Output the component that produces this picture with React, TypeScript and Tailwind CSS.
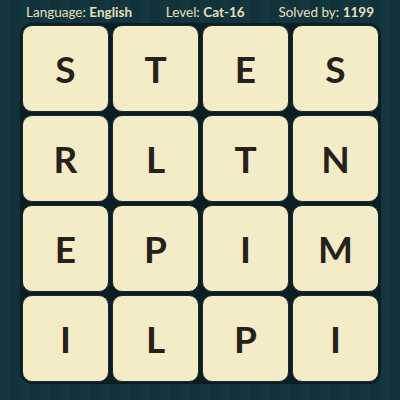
const rows = [
  ["S", "T", "E", "S"],
  ["R", "L", "T", "N"],
  ["E", "P", "I", "M"],
  ["I", "L", "P", "I"],
];

function Stat({ label, value }: { label: string; value: string }) {
  return (
    <span className="text-[13.5px] text-[#e6e0bd]">
      {label}: <span className="font-bold">{value}</span>
    </span>
  );
}

export default function App() {
  return (
    <div className="h-[400px] w-[400px] overflow-hidden bg-[#133540] bg-[repeating-linear-gradient(90deg,#14363f_0px,#14363f_10px,#12323b_10px,#12323b_20px)] font-['Lato',sans-serif]">
      <div className="flex h-[24px] items-center justify-between pl-[26px] pr-[26px] pt-[1px]">
        <Stat label="Language" value="English" />
        <Stat label="Level" value="Cat-16" />
        <Stat label="Solved by" value="1199" />
      </div>
      <div className="ml-[20px] mt-[-1px] w-[361px] rounded-[12px] bg-[#0b1e24] p-[2px]">
        <div className="grid grid-cols-4 gap-[3px]">
          {rows.flat().map((ch, i) => (
            <div
              key={i}
              className="flex h-[87px] items-center justify-center rounded-[10px] border border-[#1a2a2a] bg-[#f3ecc6] text-[37px] font-bold text-[#27211c]"
            >
              {ch}
            </div>
          ))}
        </div>
      </div>
    </div>
  );
}
